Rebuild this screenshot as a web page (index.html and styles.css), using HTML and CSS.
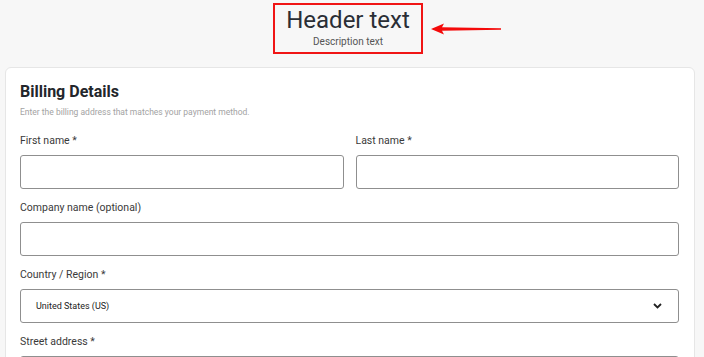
FILE: index.html
```html
<!DOCTYPE html>
<html lang="en">
<head>
<meta charset="utf-8">
<title>Billing Details</title>
<link rel="stylesheet" href="styles.css">
</head>
<body>
<header class="page-head">
  <div class="head-box">
    <h1 class="head-title">Header text</h1>
    <p class="head-desc">Description text</p>
    <svg class="annot-arrow" width="72" height="14" viewBox="0 0 72 14" aria-hidden="true">
      <path d="M0 7 L13 1.5 L11 5.2 L70 6.2 L70 7.8 L11 8.8 L13 12.5 Z" fill="#f40a0a"/>
    </svg>
  </div>
</header>
<main class="card">
  <h2 class="card-title">Billing Details</h2>
  <p class="card-desc">Enter the billing address that matches your payment method.</p>
  <div class="row two">
    <div class="field">
      <label class="label">First name *</label>
      <div class="input"></div>
    </div>
    <div class="field">
      <label class="label">Last name *</label>
      <div class="input"></div>
    </div>
  </div>
  <div class="field">
    <label class="label">Company name (optional)</label>
    <div class="input"></div>
  </div>
  <div class="field">
    <label class="label">Country / Region *</label>
    <div class="input select">
      <span class="select-value">United States (US)</span>
      <svg class="chev" width="9" height="6" viewBox="0 0 9 6" aria-hidden="true">
        <path d="M1 1 L4.5 4.5 L8 1" fill="none" stroke="#222" stroke-width="1.8"/>
      </svg>
    </div>
  </div>
  <div class="field">
    <label class="label">Street address *</label>
    <div class="input"></div>
  </div>
</main>
</body>
</html>
```
FILE: styles.css
```css
* { box-sizing: border-box; }
html, body { margin: 0; padding: 0; }
body {
  background: #f7f7f7;
  font-family: Roboto, "Liberation Sans", Arial, sans-serif;
  color: #333;
  height: 357px;
  overflow: hidden;
}
.page-head {
  display: flex;
  justify-content: center;
  margin: 3px 13px 0 5px;
}
.head-box {
  position: relative;
  border: 2px solid #f01515;
  padding: 0 11px 3px;
  text-align: center;
}
.head-title {
  margin: 0;
  font-size: 24px;
  line-height: 30px;
  font-weight: 400;
  color: #2a2e35;
}
.head-desc {
  margin: 0;
  font-size: 10px;
  line-height: 14px;
  color: #555;
}
.annot-arrow {
  position: absolute;
  left: calc(100% + 10px);
  top: 17px;
}
.card {
  margin: 13px 9px 0 5px;
  background: #fff;
  border: 1px solid #e6e6e6;
  border-radius: 6px;
  padding: 14px 15px 20px 14px;
}
.card-title {
  margin: 0;
  font-size: 16px;
  line-height: 19px;
  font-weight: 700;
  color: #23262b;
}
.card-desc {
  margin: 5px 0 15px;
  font-size: 8.5px;
  line-height: 13px;
  color: #a3a3a3;
}
.row.two {
  display: grid;
  grid-template-columns: 1fr 1fr;
  gap: 12px;
}
.field {
  display: flex;
  flex-direction: column;
  margin-bottom: 12px;
}
.row .field { margin-bottom: 0; }
.row { margin-bottom: 12px; }
.label {
  font-size: 10.5px;
  line-height: 14px;
  color: #3a3a3a;
  margin-bottom: 7px;
}
.input {
  height: 34px;
  border: 1px solid #8f8f8f;
  border-radius: 3px;
  background: #fff;
}
.select {
  display: flex;
  align-items: center;
  justify-content: space-between;
  padding: 0 16px 0 15px;
}
.select-value {
  font-size: 9px;
  color: #222;
}
.chev { display: block; }
```
